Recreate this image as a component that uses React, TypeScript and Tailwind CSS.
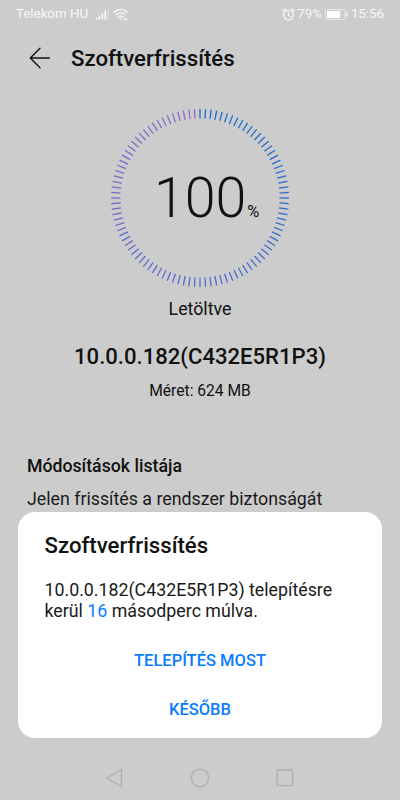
import React from 'react';

const TICK_COUNT = 100;
const START = [18, 106, 205];
const MIDDLE = [80, 105, 208];
const END = [140, 106, 200];

const mix = (a: number[], b: number[], t: number) =>
  `rgb(${a.map((v, i) => Math.round(v + (b[i] - v) * t)).join(',')})`;

const tickColor = (t: number) => (t < 0.5 ? mix(START, MIDDLE, t * 2) : mix(MIDDLE, END, t * 2 - 1));

const ProgressRing: React.FC = () => (
  <svg className="absolute inset-0" width="180" height="180" viewBox="-90 -90 180 180" fill="none">
    {Array.from({ length: TICK_COUNT }, (_, i) => (
      <line
        key={i}
        y1="-89"
        y2="-79.6"
        stroke={tickColor(i / TICK_COUNT)}
        strokeWidth="1.25"
        transform={`rotate(${(i * 360) / TICK_COUNT})`}
      />
    ))}
  </svg>
);

const SignalIcon: React.FC = () => (
  <svg width="13" height="12" viewBox="0 0 13 12" fill="#f8f8f8">
    <rect x="0" y="9.5" width="1.6" height="2" />
    <rect x="2.8" y="7.6" width="1.6" height="3.9" />
    <rect x="5.6" y="5.2" width="1.6" height="6.3" />
    <rect x="8.4" y="2.6" width="1.6" height="8.9" />
    <rect x="11.2" y="0.4" width="1.6" height="11.1" opacity="0.35" />
  </svg>
);

const WifiIcon: React.FC = () => (
  <svg width="16" height="13" viewBox="0 0 16 13" fill="none" stroke="#f8f8f8" strokeWidth="1.3" strokeLinecap="round">
    <path d="M1 4.2C4.8 0.4 10.4 0.4 14.2 4.2" />
    <path d="M3 6.8C5.7 4.1 9.6 4.1 12.3 6.8" />
    <path d="M5 9.2C6.6 7.7 8.6 7.7 10.2 9.2" />
    <circle cx="7.4" cy="11.3" r="1" fill="#f8f8f8" stroke="none" />
    <path d="M11.6 9.9l-1.3 1.3 1.3 1.3zM13 9.9l1.3 1.3-1.3 1.3z" fill="#f8f8f8" strokeWidth="0.3" />
  </svg>
);

const AlarmIcon: React.FC = () => (
  <svg width="13" height="13" viewBox="0 0 13 13" fill="none" stroke="#f8f8f8" strokeWidth="1.3" strokeLinecap="round">
    <circle cx="6.5" cy="7" r="4.9" />
    <path d="M6.5 4.3V7.2L8.3 8.7" />
    <path d="M0.7 2.9L3 1M12.3 2.9L10 1" />
  </svg>
);

const BatteryIcon: React.FC = () => (
  <svg width="23" height="11" viewBox="0 0 23 11" fill="none">
    <rect x="0.5" y="0.5" width="19.6" height="10" rx="1.2" stroke="#f4f4f4" strokeOpacity="0.7" />
    <rect x="2" y="2" width="13.3" height="7" fill="#ffffff" />
    <rect x="21.2" y="3" width="1.3" height="5" fill="#f8f8f8" />
  </svg>
);

const StatusBar: React.FC = () => (
  <div className="flex h-7 items-center justify-between pl-4 pr-4 text-[13.3px] text-[#f8f8f8]">
    <div className="flex items-center">
      <span>Telekom HU</span>
      <span className="ml-2"><SignalIcon /></span>
      <span className="ml-1"><WifiIcon /></span>
    </div>
    <div className="flex items-center">
      <AlarmIcon />
      <span className="ml-0.5">79%</span>
      <span className="ml-[3px]"><BatteryIcon /></span>
      <span className="ml-[3px]">15:56</span>
    </div>
  </div>
);

const NavBar: React.FC = () => (
  <div className="mt-auto flex h-[44px] items-center justify-between pl-[105px] pr-[106px]">
    <svg width="18" height="20" viewBox="0 0 18 20" fill="none" stroke="#b0b0b0" strokeWidth="1.4" strokeLinejoin="round">
      <path d="M16.5 1.5V18.5L2 10Z" />
    </svg>
    <svg width="20" height="20" viewBox="0 0 20 20" fill="none" stroke="#b0b0b0" strokeWidth="1.4">
      <circle cx="10" cy="10" r="8.7" />
    </svg>
    <svg width="18" height="18" viewBox="0 0 18 18" fill="none" stroke="#b0b0b0" strokeWidth="1.4">
      <rect x="1.2" y="1" width="15.4" height="15.6" rx="0.6" />
    </svg>
  </div>
);

const UpdateDialog: React.FC = () => (
  <div className="absolute left-[18px] top-[511.5px] h-[226.5px] w-[364px] rounded-[17px] bg-white px-[26.5px] pt-[19px]">
    <h2 className="text-[22.2px] font-medium leading-[28px] text-[#111111]">Szoftverfrissítés</h2>
    <p className="mt-[20px] whitespace-nowrap text-[17.8px] leading-[21px] text-[#1a1a1a]">
      10.0.0.182(C432E5R1P3) telepítésre
      <br />
      kerül <span className="text-[#0a7dff]">16</span> másodperc múlva.
    </p>
    <div className="mt-[28px] flex flex-col items-center text-[16.5px] font-medium text-[#0a7dff]">
      <button className="h-[24px] leading-[24px]">TELEPÍTÉS MOST</button>
      <button className="mt-[25px] h-[24px] leading-[24px]">KÉSŐBB</button>
    </div>
  </div>
);

const App: React.FC = () => (
  <div className="relative flex h-[800px] w-[400px] flex-col overflow-hidden bg-[#cccccc] font-[Roboto,sans-serif] text-[#111111]">
    <StatusBar />
    <header className="flex h-[60px] items-center pl-[29px]">
      <svg width="22" height="22" viewBox="0 0 22 22" fill="none" stroke="#111111" strokeWidth="1.4" strokeLinecap="round" strokeLinejoin="round">
        <path d="M11 1.2L1.3 11L11 20.8M1.3 11H20.4" />
      </svg>
      <h1 className="ml-[20px] text-[22.2px] font-medium leading-[28px]">Szoftverfrissítés</h1>
    </header>

    <main className="flex flex-col items-center">
      <div className="relative mt-[20px] h-[180px] w-[180px]">
        <ProgressRing />
        <div className="flex items-baseline pl-[44px] pt-[58px]">
          <span className="text-[55.5px] font-light leading-[66px]">100</span>
          <span className="ml-px text-[16.5px]">%</span>
        </div>
      </div>
      <p className="mt-[9px] text-[17.8px] leading-[24px]">Letöltve</p>
      <h2 className="mt-[20px] text-[22.1px] font-medium leading-[30px]">10.0.0.182(C432E5R1P3)</h2>
      <p className="mt-[10px] text-[15.6px] leading-[20px]">Méret: 624 MB</p>
    </main>

    <section className="mt-[53px] pl-[27px]">
      <h3 className="text-[17.7px] font-medium leading-[24px]">Módosítások listája</h3>
      <p className="mt-[9px] text-[17.8px] leading-[24px] text-[#1a1a1a]">Jelen frissítés a rendszer biztonságát</p>
    </section>

    <NavBar />
    <UpdateDialog />
  </div>
);

export default App;
